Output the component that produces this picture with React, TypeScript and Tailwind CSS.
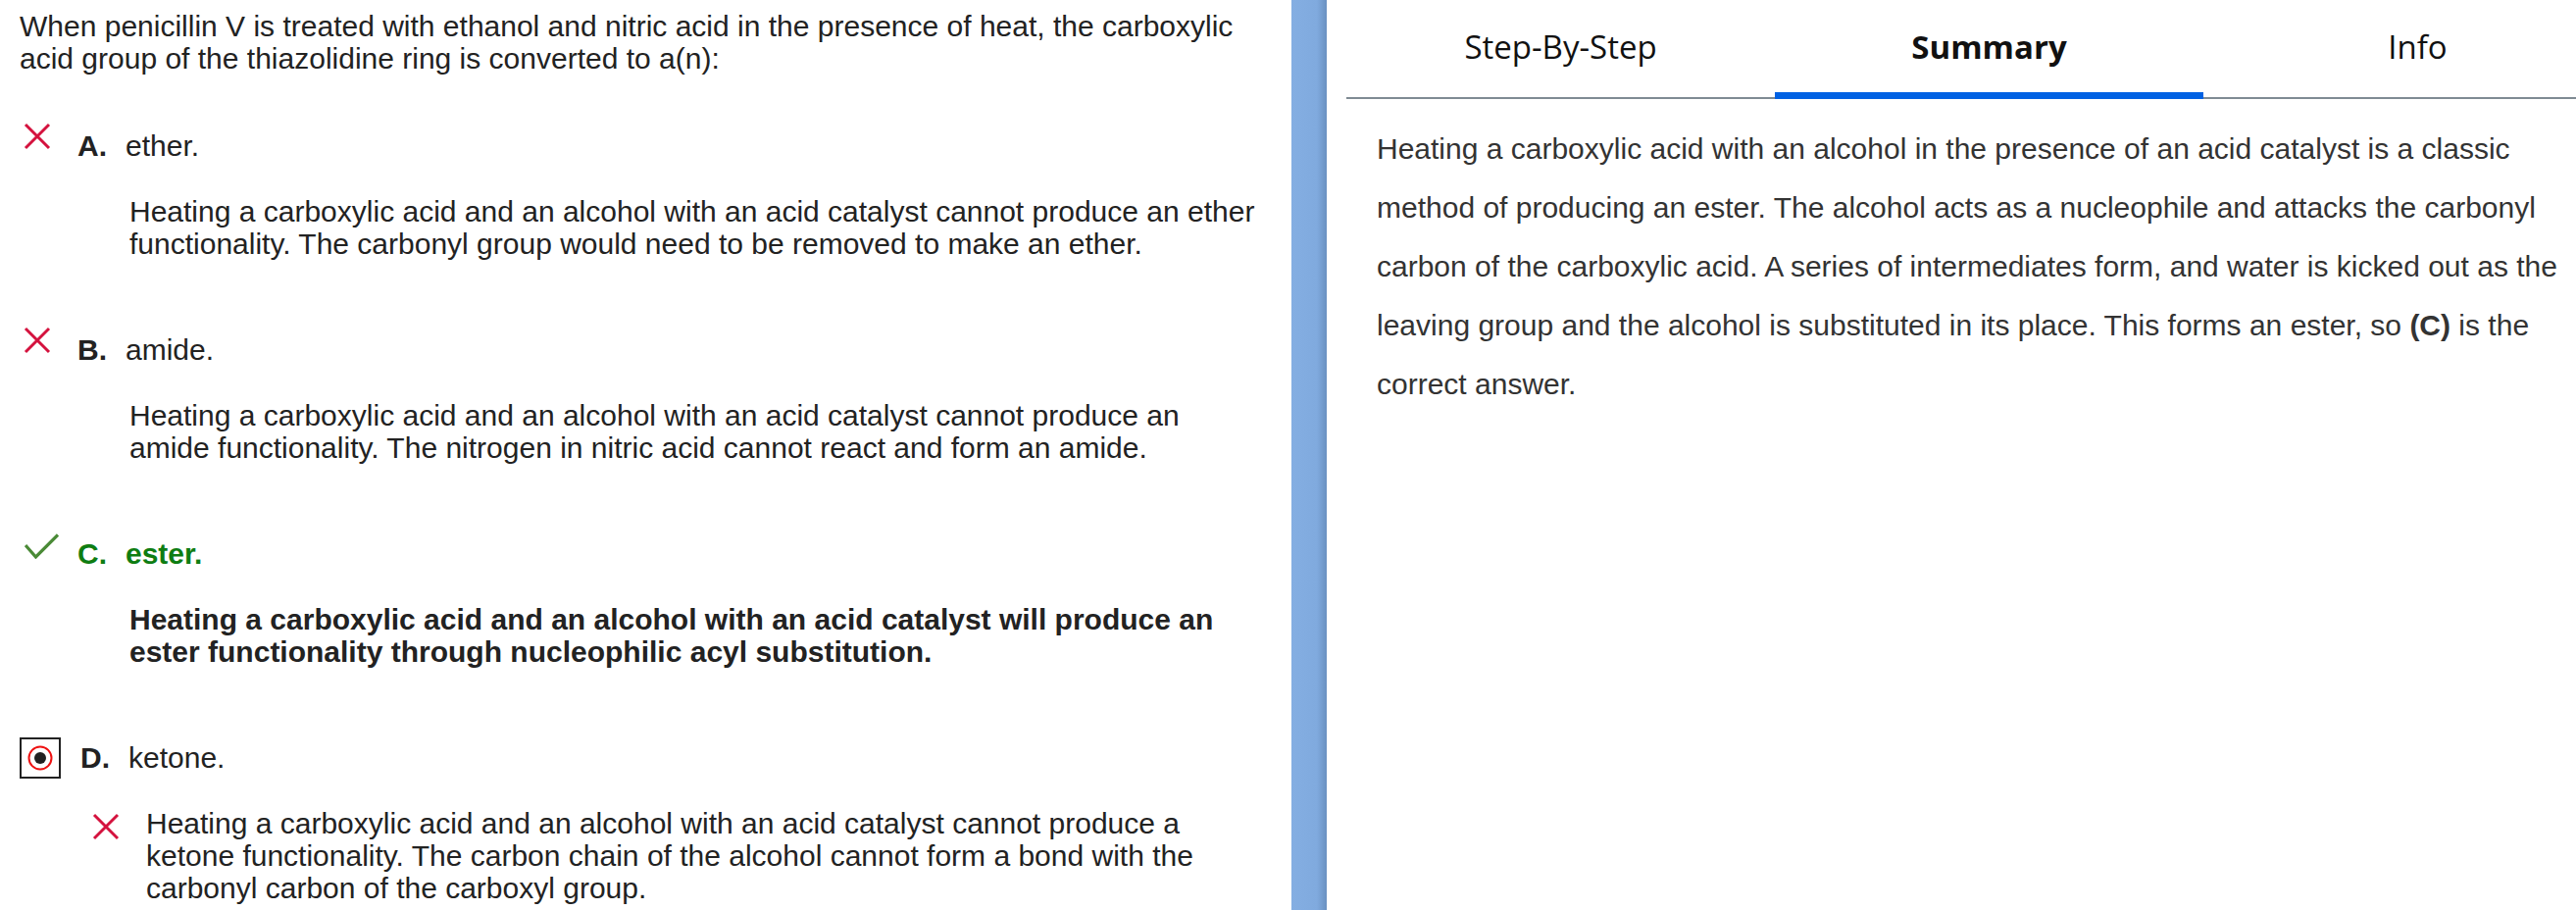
import React from "react";

const XMark = ({ className = "" }: { className?: string }) => (
  <svg width="28" height="28" viewBox="0 0 28 28" className={className}>
    <path d="M2 2 L26 26 M26 2 L2 26" stroke="#d4123e" strokeWidth="3" fill="none" />
  </svg>
);

const CheckMark = () => (
  <svg width="35" height="26" viewBox="0 0 35 26">
    <path d="M1 12 L11.5 24 L34 1.5" stroke="#4a8a36" strokeWidth="3.2" fill="none" />
  </svg>
);

const SelectedRadio = () => (
  <div className="w-[42px] h-[42px] border-2 border-[#222] flex items-center justify-center shrink-0">
    <svg width="28" height="28" viewBox="0 0 28 28">
      <circle cx="14" cy="14" r="11.5" stroke="#ee1111" strokeWidth="2" fill="white" />
      <circle cx="14" cy="14" r="6" fill="#222" />
    </svg>
  </div>
);

type Choice = {
  letter: string;
  text: string;
  explanation: string;
  status: "wrong" | "correct" | "picked";
};

const choices: Choice[] = [
  {
    letter: "A.",
    text: "ether.",
    explanation:
      "Heating a carboxylic acid and an alcohol with an acid catalyst cannot produce an ether functionality. The carbonyl group would need to be removed to make an ether.",
    status: "wrong",
  },
  {
    letter: "B.",
    text: "amide.",
    explanation:
      "Heating a carboxylic acid and an alcohol with an acid catalyst cannot produce an amide functionality. The nitrogen in nitric acid cannot react and form an amide.",
    status: "wrong",
  },
  {
    letter: "C.",
    text: "ester.",
    explanation:
      "Heating a carboxylic acid and an alcohol with an acid catalyst will produce an ester functionality through nucleophilic acyl substitution.",
    status: "correct",
  },
  {
    letter: "D.",
    text: "ketone.",
    explanation:
      "Heating a carboxylic acid and an alcohol with an acid catalyst cannot produce a ketone functionality. The carbon chain of the alcohol cannot form a bond with the carbonyl carbon of the carboxyl group.",
    status: "picked",
  },
];

const ChoiceBlock = ({ choice }: { choice: Choice }) => {
  if (choice.status === "picked") {
    return (
      <div className="mt-[75px]">
        <div className="flex items-center h-[33px]">
          <div className="w-[62px] shrink-0">
            <SelectedRadio />
          </div>
          <span className="w-[49px] shrink-0 font-bold">{choice.letter}</span>
          <span>{choice.text}</span>
        </div>
        <div className="mt-[34px] pl-[74px] flex items-start">
          <XMark className="mt-[6px] mr-[27px] shrink-0" />
          <p>{choice.explanation}</p>
        </div>
      </div>
    );
  }

  const correct = choice.status === "correct";

  return (
    <div className="mt-[75px] first:mt-[56px]">
      <div className={`flex items-start h-[33px] ${correct ? "text-[#0e7d12] font-bold" : ""}`}>
        <div className={`w-[59px] shrink-0 ${correct ? "pl-[5px] -mt-[4px]" : "pl-[4px] -mt-[7px]"}`}>
          {correct ? <CheckMark /> : <XMark />}
        </div>
        <span className="w-[49px] shrink-0 font-bold">{choice.letter}</span>
        <span>{choice.text}</span>
      </div>
      <p className={`mt-[34px] pl-[112px] ${correct ? "font-bold" : ""}`}>{choice.explanation}</p>
    </div>
  );
};

export default function App() {
  return (
    <div className="flex w-[2627px] h-[928px] overflow-hidden bg-white">
      {/* Question + answer choices */}
      <div className="w-[1317px] shrink-0 pl-[20px] pr-[34px] pt-[10px] font-['Liberation_Sans',Arial,sans-serif] text-[30px] leading-[33px] text-[#222]">
        <p>
          When penicillin V is treated with ethanol and nitric acid in the presence of heat, the
          carboxylic acid group of the thiazolidine ring is converted to a(n):
        </p>
        <div>
          {choices.map((c) => (
            <ChoiceBlock key={c.letter} choice={c} />
          ))}
        </div>
      </div>

      {/* Divider */}
      <div className="w-[36px] shrink-0 bg-[linear-gradient(to_right,#84aee2,#80aade_72%,#6a91c1)]" />

      {/* Explanation panel */}
      <div className="shrink-0 pl-[20px]">
        <div className="w-[1311px]">
          <div className="flex h-[101px] border-b-2 border-[#7f8b93] font-['Open_Sans',sans-serif] text-[33px] text-[#111]">
            <div className="w-[437px] flex items-center justify-center pb-[3px]">Step-By-Step</div>
            <div className="w-[437px] relative flex items-center justify-center pb-[3px] font-bold">
              Summary
              <div className="absolute left-0 right-0 bottom-[-2px] h-[7px] bg-[#0061e3]" />
            </div>
            <div className="w-[437px] flex items-center justify-center pb-[3px]">Info</div>
          </div>
          <p className="mt-[21px] px-[31px] font-['Liberation_Sans',Arial,sans-serif] text-[30px] leading-[60px] text-[#333]">
            Heating a carboxylic acid with an alcohol in the presence of an acid catalyst is a
            classic method of producing an ester. The alcohol acts as a nucleophile and attacks the
            carbonyl carbon of the carboxylic acid. A series of intermediates form, and water is
            kicked out as the leaving group and the alcohol is substituted in its place. This forms
            an ester, so <strong>(C)</strong> is the correct answer.
          </p>
        </div>
      </div>
    </div>
  );
}
